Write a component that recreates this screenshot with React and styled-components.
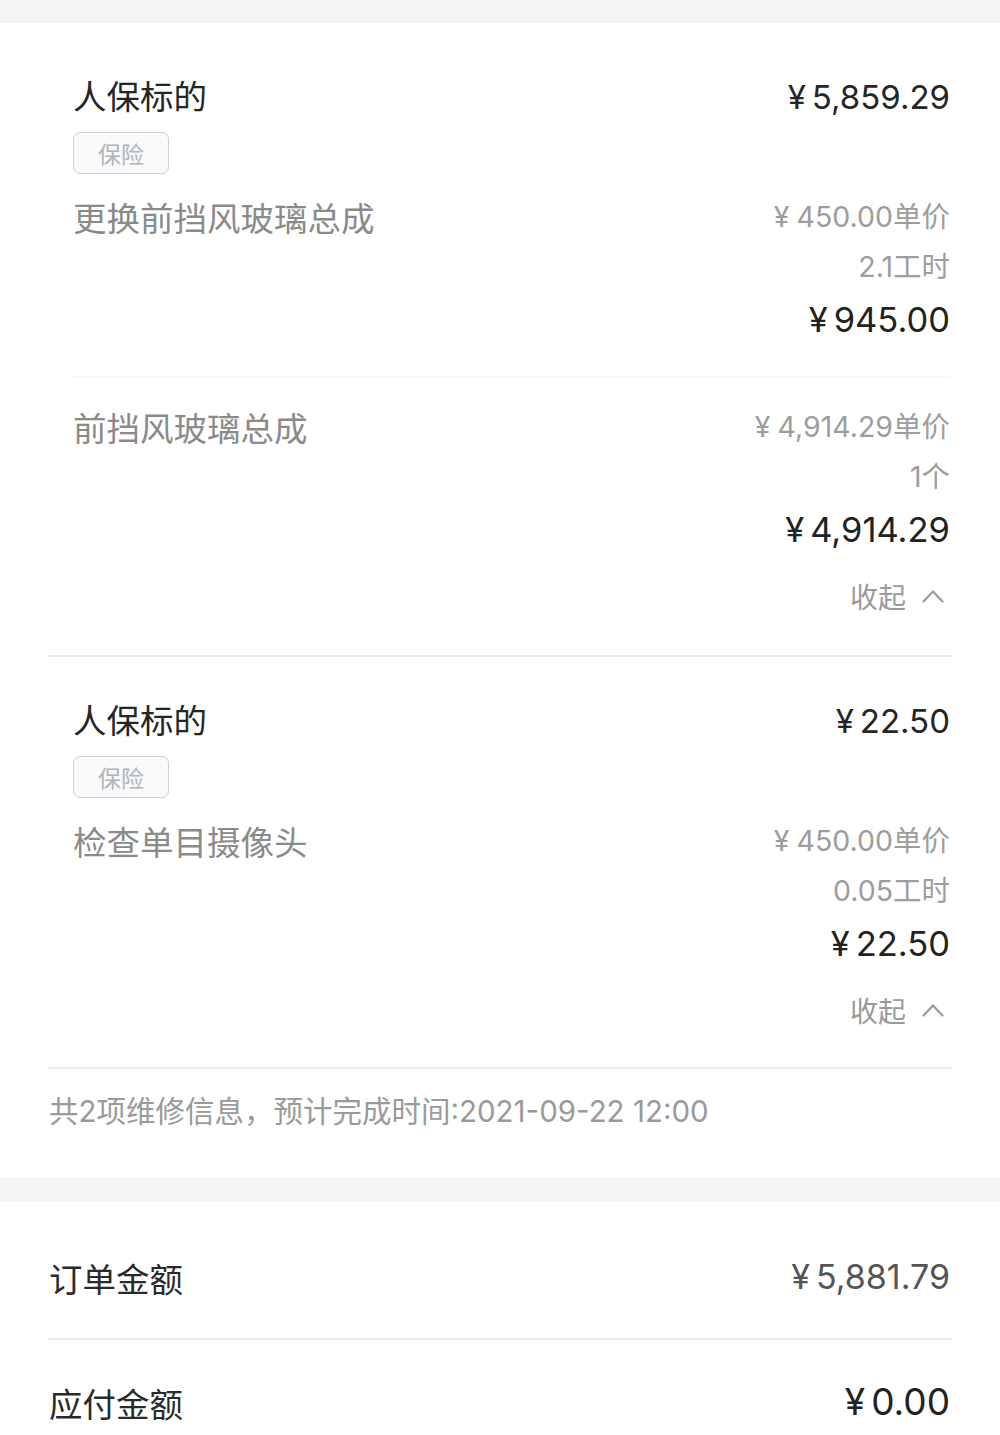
import React from "react";
import styled, { createGlobalStyle } from "styled-components";

const Global = createGlobalStyle`
  html, body { margin: 0; padding: 0; background: #f4f4f4; }
  body { font-family: Inter, "Noto Sans CJK SC", sans-serif; -webkit-font-smoothing: antialiased; }
  * { box-sizing: border-box; }
`;

const Page = styled.div`
  width: 1000px;
  padding-top: 23px;
  background: #f4f4f4;
`;

const Card = styled.section`
  background: #fff;
  padding: ${(p) => p.$pad || "11px 48px 0"};
  margin-bottom: ${(p) => p.$mb || "0"};
`;

const Item = styled.div`
  padding: ${(p) => p.$pt || 40}px 2px 0 25px;
`;

const HeaderRow = styled.div`
  display: flex;
  justify-content: space-between;
  align-items: center;
  height: 46px;
`;

const Title = styled.div`
  font-size: 33.5px;
  color: #252525;
  line-height: 46px;
`;

const Price = styled.div`
  font-size: ${(p) => p.$size || 33}px;
  color: ${(p) => p.$color || "#262626"};
  line-height: 46px;
  display: flex;
  align-items: baseline;
`;

const Yen = styled.span`
  margin-right: ${(p) => p.$gap || 6}px;
`;

const Tag = styled.div`
  margin-top: 12px;
  width: 96px;
  height: 42px;
  border: 1.5px solid #cfd1d5;
  border-radius: 7px;
  background: #f8f9fb;
  color: #b0b3b9;
  font-size: 23px;
  display: flex;
  align-items: center;
  justify-content: center;
`;

const Detail = styled.div`
  display: flex;
  justify-content: space-between;
  align-items: flex-start;
  padding-top: ${(p) => p.$pt || 18}px;
  padding-bottom: ${(p) => p.$pb || 0}px;
  border-bottom: ${(p) => (p.$line ? "1px solid #f6f6f6" : "none")};
`;

const Name = styled.div`
  font-size: 33.5px;
  color: #8a8a8a;
  line-height: 46px;
  padding-top: 4px;
`;

const Figures = styled.div`
  display: flex;
  flex-direction: column;
  align-items: flex-end;
`;

const Sub = styled.div`
  font-size: 28.5px;
  color: #9d9d9d;
  line-height: 50px;
  display: flex;
  align-items: baseline;
`;

const Total = styled.div`
  font-size: 34.5px;
  color: #222;
  line-height: 56px;
  display: flex;
  align-items: baseline;
`;

const Collapse = styled.div`
  display: flex;
  justify-content: flex-end;
  align-items: center;
  gap: 16px;
  margin-top: 18px;
  height: 40px;
  padding-right: 6px;
  font-size: 28px;
  color: #9a9a9a;
`;

const Divider = styled.div`
  height: 2px;
  background: #ececec;
  margin-top: ${(p) => p.$mt || 0}px;
`;

const Footer = styled.div`
  padding: 22px 0 47px 1px;
  font-size: 29.5px;
  line-height: 40px;
  color: #9a9a9a;
`;

const SumRow = styled.div`
  display: flex;
  justify-content: space-between;
  align-items: center;
  height: 124px;
  padding: 0 2px 0 1px;
  border-bottom: ${(p) => (p.$line ? "2px solid #ececec" : "none")};
`;

const SumLabel = styled.div`
  font-size: 33.5px;
  color: #2a2a2a;
`;

const Chevron = () => (
  <svg width="22" height="14" viewBox="0 0 22 14" fill="none">
    <polyline points="1.5,12.5 11,2.5 20.5,12.5" stroke="#9a9a9a" strokeWidth="2.2" strokeLinecap="round" strokeLinejoin="round" />
  </svg>
);

const Money = ({ v, gap }) => (
  <>
    <Yen $gap={gap}>¥</Yen>
    {v}
  </>
);

const lines = [
  {
    title: "人保标的",
    price: "5,859.29",
    parts: [
      { name: "更换前挡风玻璃总成", unit: "450.00", qty: "2.1工时", total: "945.00" },
      { name: "前挡风玻璃总成", unit: "4,914.29", qty: "1个", total: "4,914.29" },
    ],
  },
  {
    title: "人保标的",
    price: "22.50",
    parts: [{ name: "检查单目摄像头", unit: "450.00", qty: "0.05工时", total: "22.50" }],
  },
];

export default function App() {
  return (
    <Page>
      <Global />
      <Card $mb="24px">
        {lines.map((it, i) => (
          <React.Fragment key={i}>
            <Item $pt={i === 0 ? 40 : 41}>
              <HeaderRow>
                <Title>{it.title}</Title>
                <Price>
                  <Money v={it.price} />
                </Price>
              </HeaderRow>
              <Tag>保险</Tag>
              {it.parts.map((p, j) => {
                const last = j === it.parts.length - 1;
                return (
                  <Detail key={j} $pt={j === 0 ? 18 : 25} $pb={last ? 0 : 28} $line={!last}>
                    <Name>{p.name}</Name>
                    <Figures>
                      <Sub>
                        <Money v={p.unit} gap={7} />单价
                      </Sub>
                      <Sub>{p.qty}</Sub>
                      <Total>
                        <Money v={p.total} />
                      </Total>
                    </Figures>
                  </Detail>
                );
              })}
              <Collapse>
                <span>收起</span>
                <Chevron />
              </Collapse>
            </Item>
            <Divider $mt={i === 0 ? 39 : 37} />
          </React.Fragment>
        ))}
        <Footer>共2项维修信息，预计完成时间:2021-09-22 12:00</Footer>
      </Card>
      <Card $pad="14px 48px 0">
        <SumRow $line>
          <SumLabel>订单金额</SumLabel>
          <Price $size={34} $color="#555">
            <Money v="5,881.79" />
          </Price>
        </SumRow>
        <SumRow>
          <SumLabel>应付金额</SumLabel>
          <Price $size={37} $color="#222">
            <Money v="0.00" />
          </Price>
        </SumRow>
      </Card>
    </Page>
  );
}
